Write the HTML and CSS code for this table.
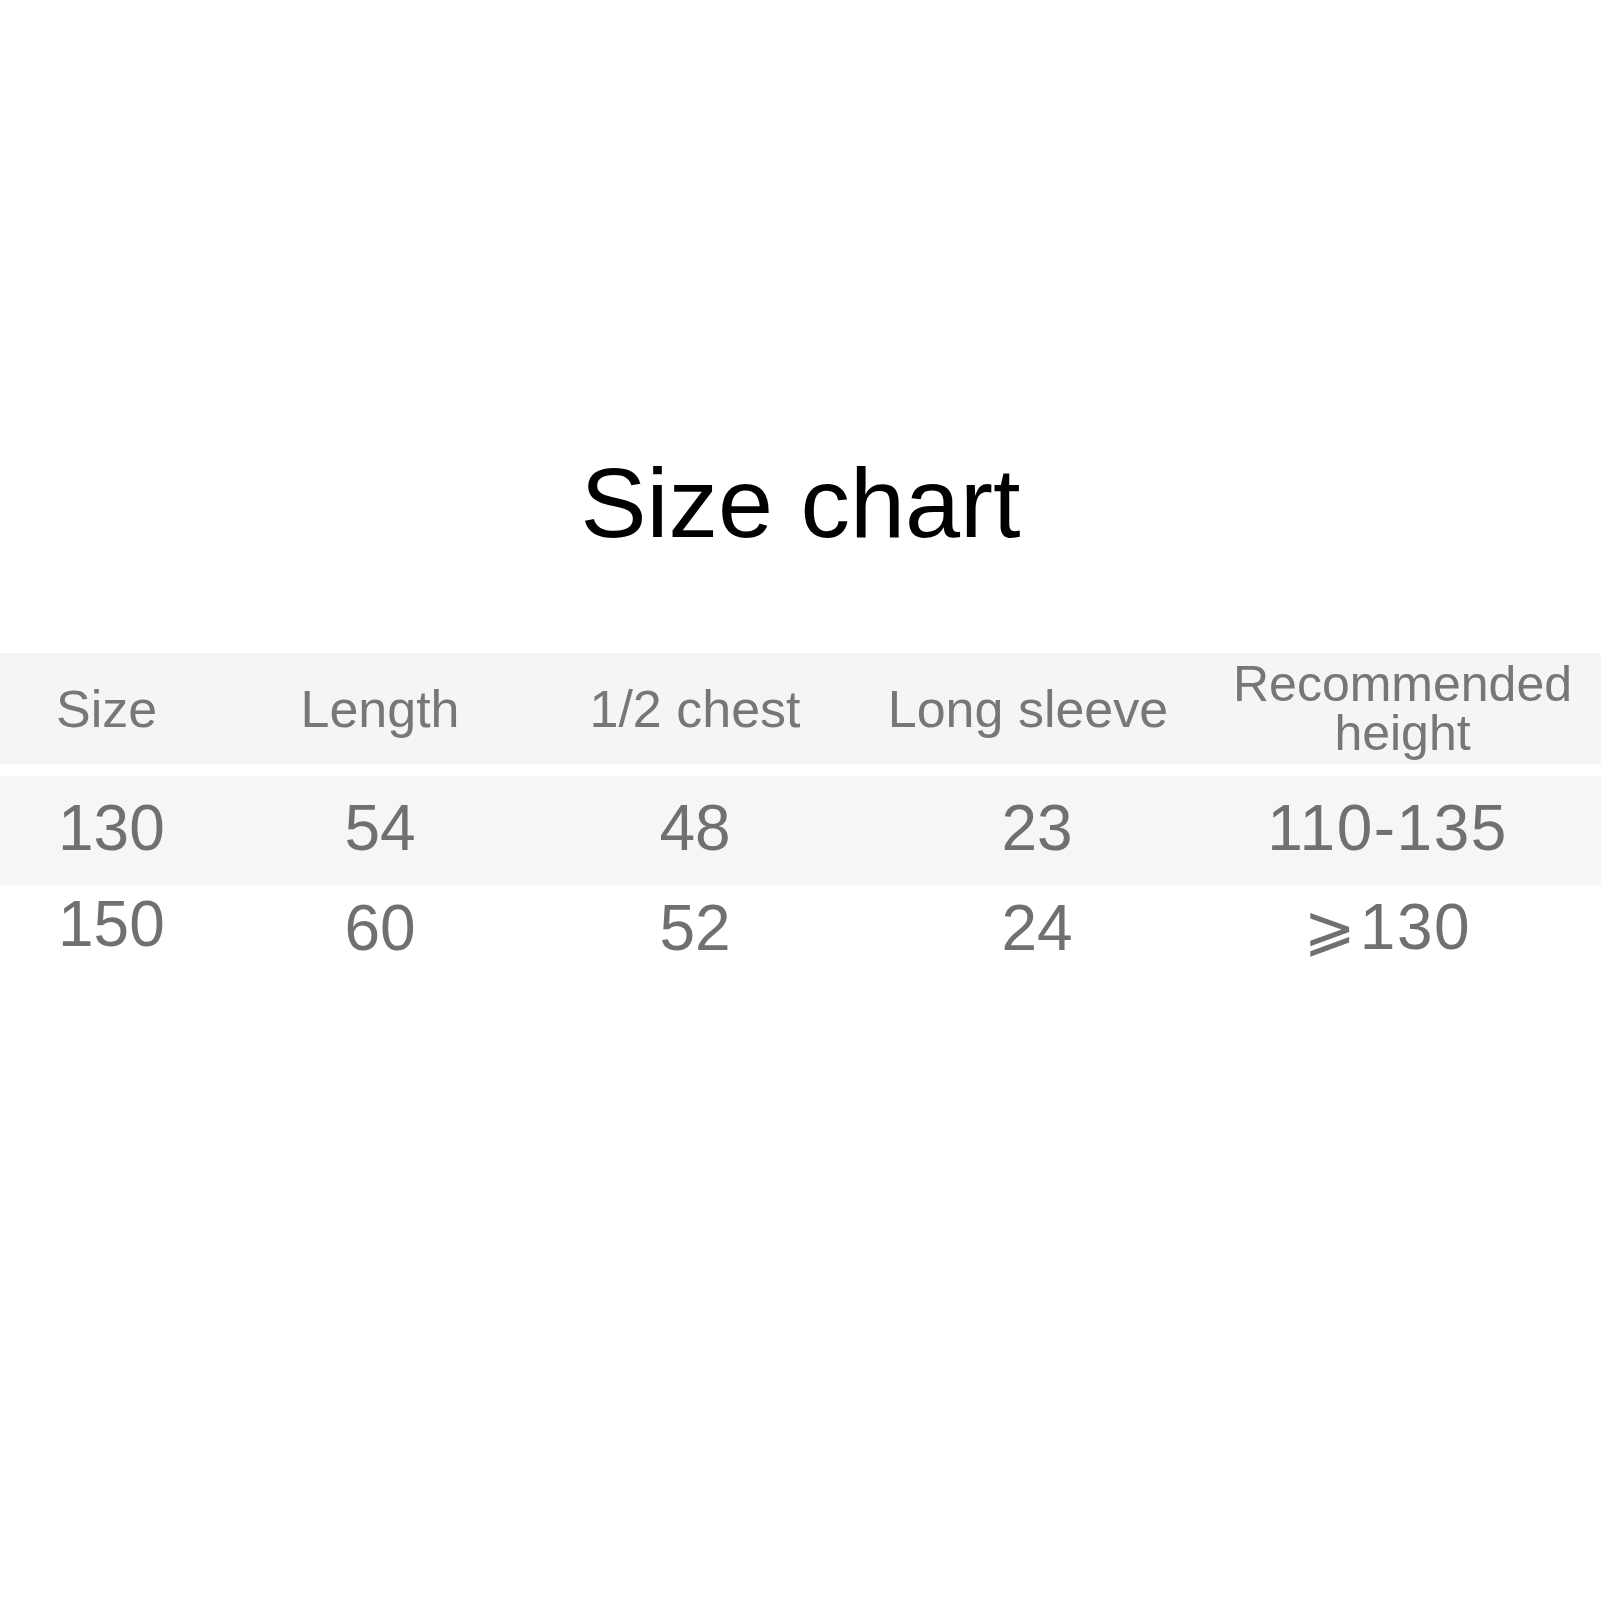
FILE: index.html
```html
<!DOCTYPE html>
<html lang="en">
<head>
<meta charset="utf-8">
<title>Size chart</title>
<link rel="stylesheet" href="styles.css">
</head>
<body>
<main class="page">
  <h1 class="title">Size chart</h1>
  <div class="chart">
    <div class="row head">
      <div class="cell c1">Size</div>
      <div class="cell c2">Length</div>
      <div class="cell c3">1/2 chest</div>
      <div class="cell c4">Long sleeve</div>
      <div class="cell c5 two">Recommended<br>height</div>
    </div>
    <div class="row data shade">
      <div class="cell c1">130</div>
      <div class="cell c2">54</div>
      <div class="cell c3">48</div>
      <div class="cell c4 n4">23</div>
      <div class="cell c5 n5">110-135</div>
    </div>
    <div class="row data plain">
      <div class="cell c1 up">150</div>
      <div class="cell c2">60</div>
      <div class="cell c3">52</div>
      <div class="cell c4 n4">24</div>
      <div class="cell c5 n5"><span class="ge">⩾</span>130</div>
    </div>
  </div>
</main>
</body>
</html>
```

FILE: styles.css
```css
html, body {
  margin: 0;
  padding: 0;
  background: #ffffff;
}

.page {
  width: 1601px;
  padding-top: 453px;
  font-family: "Liberation Sans", Arial, sans-serif;
}

.title {
  margin: 0;
  font-weight: normal;
  font-size: 99px;
  line-height: 100px;
  color: #000;
  text-align: center;
}

.chart {
  margin-top: 100px;
  display: flex;
  flex-direction: column;
}

.row {
  display: grid;
  grid-template-columns: 216px 328px 302px 364px 391px;
  align-items: center;
}

.head {
  height: 111px;
  background: #f5f5f5;
  color: #777777;
  font-size: 52px;
  line-height: 60px;
  margin-bottom: 12px;
}

.head .two {
  font-size: 50px;
  line-height: 49px;
  padding-right: 6px;
}

.cell {
  text-align: center;
  white-space: nowrap;
}

.c1 {
  text-align: left;
  padding-left: 56px;
}

.data {
  font-size: 64px;
  line-height: 70px;
  color: #707070;
}

.data .cell {
  padding-bottom: 5px;
}

.data .c1 {
  padding-left: 58px;
}

.shade {
  height: 109px;
  background: #f6f6f6;
}

.plain {
  height: 90px;
  background: #ffffff;
}

.data .n4 {
  padding-left: 18px;
}

.data .n5 {
  padding-right: 36px;
  letter-spacing: 1.5px;
}

.data .up {
  padding-bottom: 12px;
}

.ge {
  font-family: "DejaVu Sans", "Noto Sans CJK SC", sans-serif;
  font-size: 62px;
  letter-spacing: 4px;
}
```
